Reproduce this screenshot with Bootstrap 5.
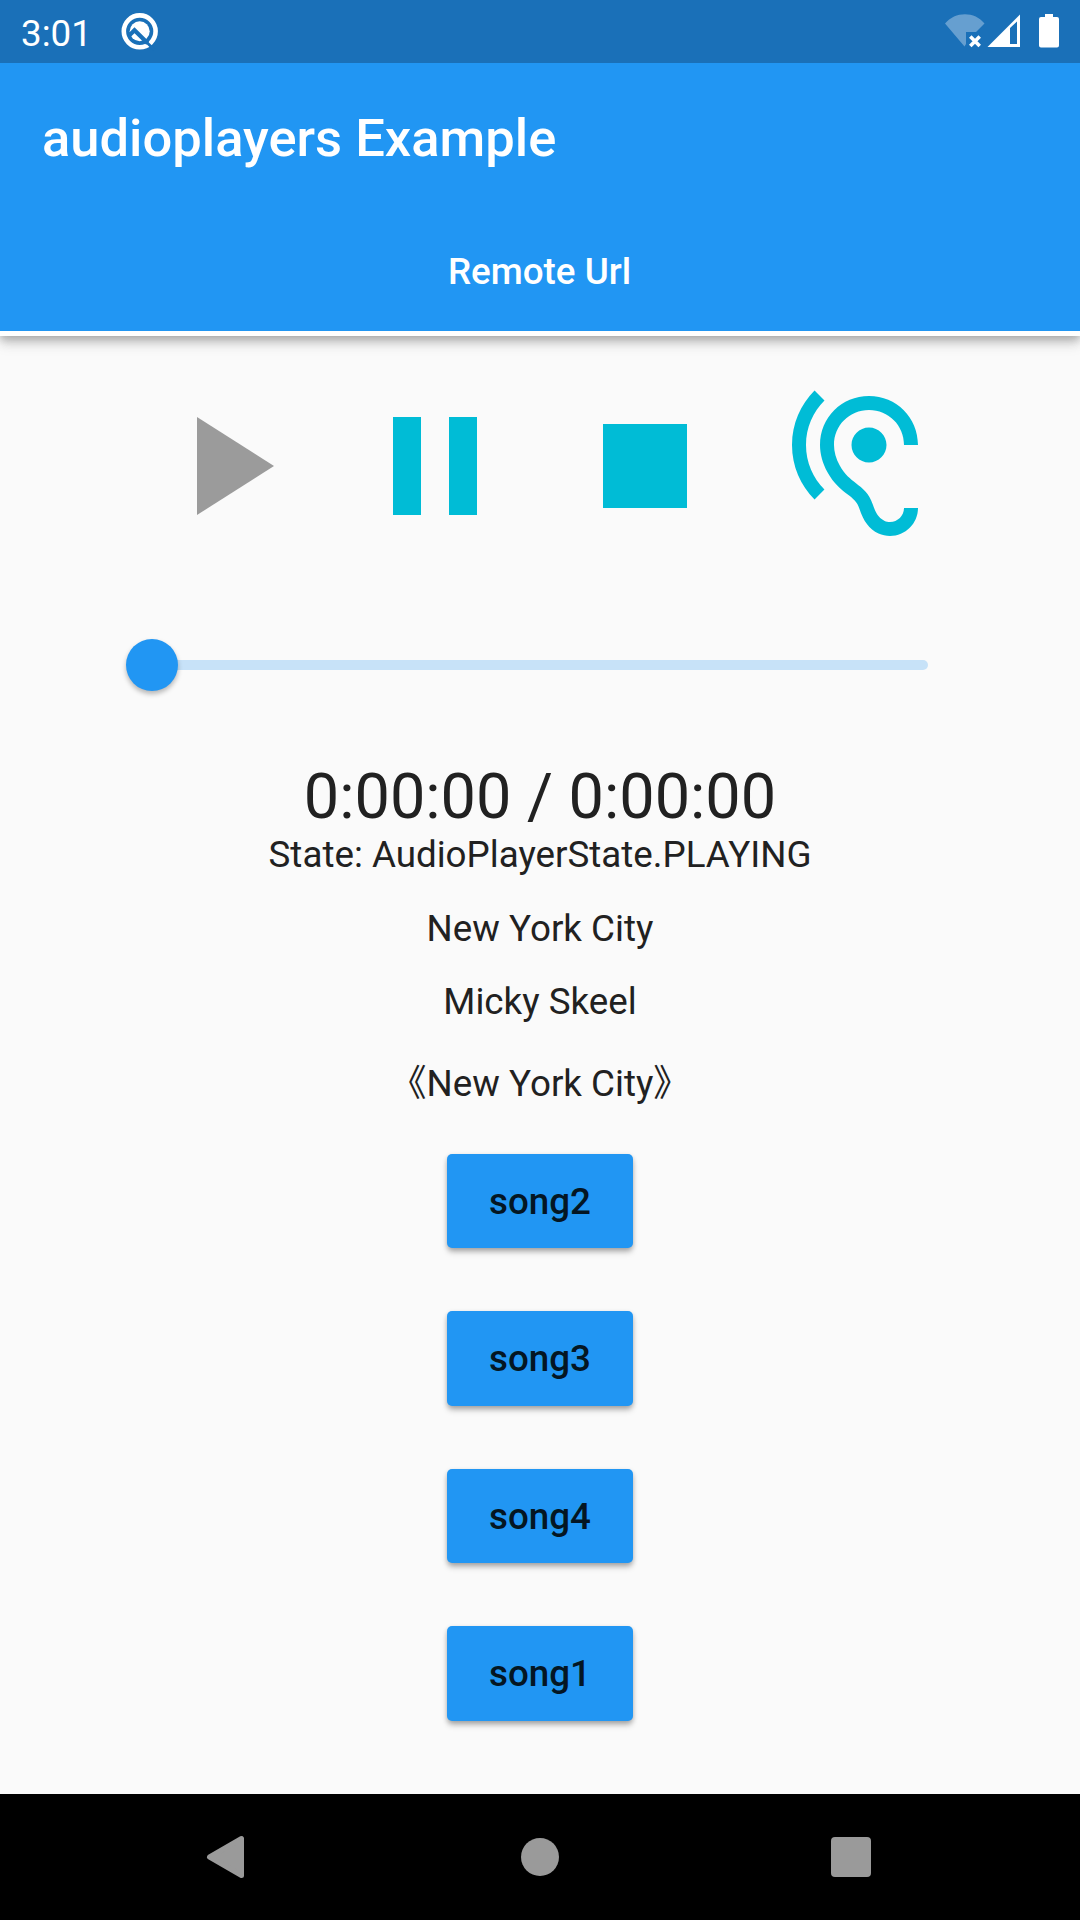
<!DOCTYPE html>
<html lang="en">
<head>
<meta charset="utf-8">
<meta name="viewport" content="width=device-width, initial-scale=1">
<title>audioplayers Example</title>
<link href="https://cdn.jsdelivr.net/npm/bootstrap@5.3.0/dist/css/bootstrap.min.css" rel="stylesheet">
<style>
  body { font-family: Roboto, "Noto Sans CJK SC", sans-serif; background: #fafafa; color: #212121; font-size: 36.75px; line-height: 43px; }
  .screen { height: 1920px; overflow: hidden; }
  .screen svg { display: block; flex: none; }
  .status-bar { height: 63px; background: #1a70b8; padding: 0 19px 0 21px; position: relative; z-index: 1; }
  .clock { line-height: 63px; padding-top: 3px; }
  .app-bar { height: 273px; background: #2196f3; box-shadow: 0 5px 10.5px rgba(0,0,0,.2), 0 10.5px 13px rgba(0,0,0,.06), 0 2px 8px rgba(0,0,0,.14); }
  .app-title { height: 147px; padding: 4px 42px 0; font-size: 52.5px; font-weight: 500; }
  .app-tab { height: 126px; padding: 2px 1px 0 0; border-bottom: 5.25px solid #fff; font-weight: 500; }
  .player { padding-top: 25px; }
  .control { width: 210px; height: 210px; color: #00bcd6; }
  .control:disabled { color: #9b9b9b; opacity: 1; border: 0; }
  .seek { height: 126px; margin-top: 31px; padding: 0 152.5px 0 125.5px; }
  .thumb { width: 52.5px; height: 52.5px; background: #2196f3; box-shadow: 0 3px 5px rgba(0,0,0,.28); z-index: 1; }
  .track { height: 10.5px; margin-left: -26px; background: #c7e2f8; border-radius: 0 5px 5px 0; }
  .elapsed { font-size: 63px; line-height: 74px; margin-top: 32px; }
  .state { margin-top: -1px; margin-bottom: 31px; }
  .artist { margin-top: 30px; }
  .album { margin-top: 39px; margin-bottom: 48.500px; }
  .song { width: 186px; height: 94.500px; padding: 1px 0 0; background: #2196f3; color: #041623; font-weight: 500; border-radius: 5px; box-shadow: 0 5px 6px -1px rgba(0,0,0,.22), 0 2px 5px rgba(0,0,0,.2); }
  .songs { gap: 63px; }
  .nav-keys { height: 126px; background: #000; }
</style>
</head>
<body>
<div class="screen d-flex flex-column">
  <div class="status-bar d-flex align-items-center justify-content-between text-white">
    <div class="d-flex align-items-center">
      <span class="clock">3:01</span>
      <svg class="ms-4" width="50" height="63" viewBox="0 0 50 63">
        <g transform="translate(23.700 31.300)">
          <circle r="15.900" fill="none" stroke="#fff" stroke-width="4.600"/>
          <circle r="10" fill="#fff"/>
          <path d="M-10.500 4.200-5.200-1 8 12" fill="none" stroke="#1a70b8" stroke-width="4.200"/>
          <path d="M7 11 15 19" stroke="#1a70b8" stroke-width="2.800"/>
        </g>
      </svg>
    </div>
    <svg width="120" height="63" viewBox="941 0 120 63">
      <path d="M945 23.500C955 11 975 11 984.500 23.500L976 32H966V44L964.500 46.500Z" fill="#669fd0"/>
      <path d="m970.300 36.500 9.400 9.400m0-9.400-9.400 9.400" stroke="#fff" stroke-width="3.600"/>
      <path fill-rule="evenodd" d="M987.500 47 1020 14.500V47ZM1010 28V44H1017V21.500Z" fill="#fff"/>
      <path d="M1045 14h8v3h4a2 2 0 0 1 2 2v26.500a2 2 0 0 1-2 2h-16a2 2 0 0 1-2-2V19a2 2 0 0 1 2-2h4z" fill="#fff"/>
    </svg>
  </div>

  <header class="app-bar text-white flex-shrink-0">
    <div class="app-title d-flex align-items-center">audioplayers Example</div>
    <div class="app-tab d-flex align-items-center justify-content-center">Remote Url</div>
  </header>

  <main class="player flex-grow-1 d-flex flex-column align-items-center text-center">
    <div class="d-flex">
      <button class="btn p-0 control d-flex align-items-center justify-content-center" disabled aria-label="Play">
        <svg width="168" height="168" viewBox="0 0 24 24" fill="currentColor"><path d="M8 5v14l11-7z"/></svg>
      </button>
      <button class="btn p-0 border-0 control d-flex align-items-center justify-content-center" aria-label="Pause">
        <svg width="168" height="168" viewBox="0 0 24 24" fill="currentColor"><path d="M6 19h4V5H6v14zm8-14v14h4V5h-4z"/></svg>
      </button>
      <button class="btn p-0 border-0 control d-flex align-items-center justify-content-center" aria-label="Stop">
        <svg width="168" height="168" viewBox="0 0 24 24" fill="currentColor"><path d="M6 6h12v12H6z"/></svg>
      </button>
      <button class="btn p-0 border-0 control d-flex align-items-center justify-content-center" aria-label="Output">
        <svg width="168" height="168" viewBox="0 0 24 24" fill="currentColor"><path d="M17 20c-.29 0-.56-.06-.76-.15-.71-.37-1.21-.88-1.710-2.380-.51-1.560-1.470-2.290-2.390-3-.79-.61-1.610-1.240-2.320-2.530C9.290 10.980 9 9.930 9 9c0-2.800 2.200-5 5-5s5 2.200 5 5h2c0-3.930-3.070-7-7-7S7 5.070 7 9c0 1.260.38 2.650 1.070 3.900.91 1.650 1.980 2.480 2.850 3.150.81.62 1.390 1.070 1.710 2.050.6 1.820 1.370 2.840 2.730 3.550.51.23 1.070.35 1.640.35 2.210 0 4-1.790 4-4h-2c0 1.100-.9 2-2 2zM7.640 2.640 6.220 1.220C4.230 3.210 3 5.960 3 9s1.230 5.790 3.220 7.780l1.410-1.410C6.010 13.740 5 11.490 5 9s1.010-4.740 2.640-6.360zM11.500 9c0 1.380 1.120 2.500 2.500 2.500s2.500-1.120 2.500-2.500-1.120-2.500-2.500-2.500-2.500 1.120-2.500 2.500z"/></svg>
      </button>
    </div>
    <div class="seek w-100 d-flex align-items-center">
      <div class="thumb rounded-circle flex-shrink-0"></div>
      <div class="track flex-grow-1"></div>
    </div>
    <div class="elapsed">0:00:00 / 0:00:00</div>
    <div class="state">State: AudioPlayerState.PLAYING</div>
    <div>New York City</div>
    <div class="artist">Micky Skeel</div>
    <div class="album">《New York City》</div>
    <div class="songs d-flex flex-column">
      <button class="song border-0">song2</button>
      <button class="song border-0">song3</button>
      <button class="song border-0">song4</button>
      <button class="song border-0">song1</button>
    </div>
  </main>

  <nav class="nav-keys flex-shrink-0">
    <svg width="1080" height="126" viewBox="0 1794 1080 126" fill="#9a9a9a" stroke="#9a9a9a" stroke-linejoin="round">
      <path d="M209.500 1857 241.500 1838.500V1875.500Z" stroke-width="5"/>
      <circle cx="540" cy="1857" r="19" stroke="none"/>
      <rect x="831" y="1837" width="40" height="40" rx="4" stroke="none"/>
    </svg>
  </nav>
</div>
<script src="https://cdn.jsdelivr.net/npm/bootstrap@5.3.0/dist/js/bootstrap.bundle.min.js"></script>
</body>
</html>
